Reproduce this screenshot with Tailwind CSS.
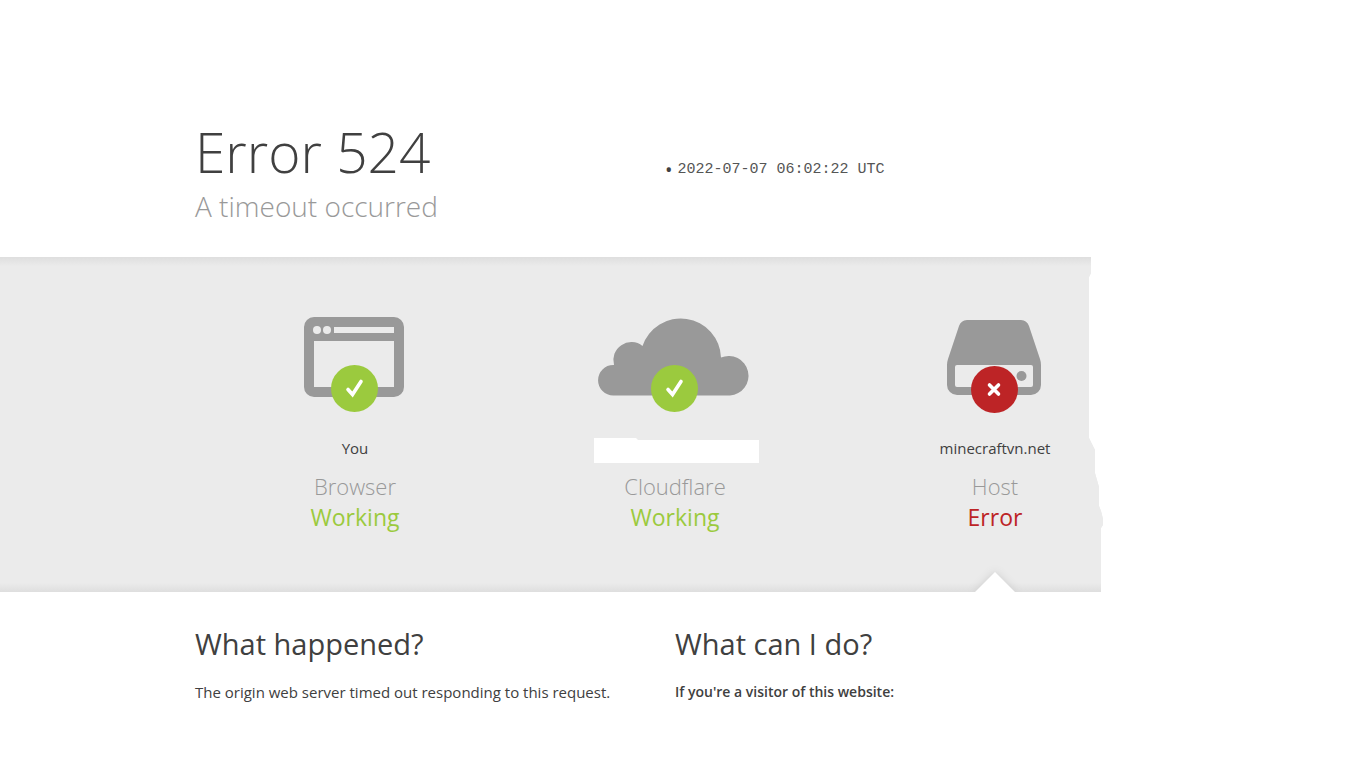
<!DOCTYPE html>
<html lang="en">
<head>
    <meta charset="UTF-8">
    <meta name="viewport" content="width=device-width, initial-scale=1.0">
    <title>524: A timeout occurred</title>
    <script src="https://cdn.jsdelivr.net/npm/@tailwindcss/browser@4"></script>
</head>
<body class="bg-white font-['Segoe_UI','Open_Sans',sans-serif] text-[15px] leading-6 text-[#404040]">

    <!-- Title -->
    <header class="pt-30 pr-4">
        <div class="mx-auto flex max-w-[960px] flex-wrap">
            <div class="w-1/2 min-w-[250px]">
                <h1 class="text-[55px] leading-[64px] font-light">Error 524</h1>
                <h2 class="pt-1 text-[28px] leading-[36px] font-light text-[#999999]">A timeout occurred</h2>
            </div>
            <ul class="-ml-[10px] w-1/2 list-none pt-[38px]">
                <li class="flex items-center gap-[5px]"><span class="text-xl leading-6">&bull;</span><time class="font-['Courier_New','Liberation_Mono',monospace] text-[15px] leading-6 text-[#555555]">2022-07-07 06:02:22 UTC</time></li>
            </ul>
        </div>
    </header>

    <!-- Connection status -->
    <section class="mt-[33px] overflow-hidden bg-[#ebebeb] bg-[linear-gradient(#dedede,#ebebeb_9px,#ebebeb_326px,#dedede)] pr-4 [clip-path:polygon(0_0,1091px_0,1091px_16px,1089px_20px,1089px_181px,1095px_193px,1095px_216px,1099px_230px,1099px_249px,1101px_254px,1103px_262px,1103px_268px,1101px_271px,1101px_100%,0_100%)]">
        <div class="mx-auto grid max-w-[960px] grid-cols-3 text-center">
            <div class="flex flex-col items-center pt-[55px] pb-[59px]">
                <svg class="h-[104px] w-[160px]" viewBox="0 0 160 104" fill="none" aria-hidden="true">
                    <path fill="#999" fill-rule="evenodd" d="M39 5h80a10 10 0 0 1 10 10v60a10 10 0 0 1-10 10H39a10 10 0 0 1-10-10V15A10 10 0 0 1 39 5zM39 29v46h80V29zM59 15v6h60v-6z" />
                    <circle cx="42" cy="18" r="4" fill="#ebebeb" />
                    <circle cx="52" cy="18" r="4" fill="#ebebeb" />
                    <circle cx="79.500" cy="76.500" r="23.500" fill="#9bca3e" />
                    <path d="M73 77.500l4.500 5L86 69.500" stroke="#fff" stroke-width="3.600" stroke-linecap="round" />
                </svg>
                <span class="mt-5 h-6">You</span>
                <h3 class="mt-[11px] text-[22px] leading-[31px] font-light text-[#999999]">Browser</h3>
                <span class="text-[23px] leading-[31px] text-[#9bca3e]">Working</span>
            </div>
            <div class="flex flex-col items-center pt-[55px] pb-[59px]">
                <svg class="h-[104px] w-[160px]" viewBox="0 0 160 104" fill="none" aria-hidden="true">
                    <path fill="#999" d="M18.300 83.500a15.250 15.250 0 0 1 0-30.500H19A18 18 0 0 1 47.500 34a40.300 40.300 0 0 1 78.500 11.500A19.800 19.800 0 1 1 135 83.500z" />
                    <circle cx="79.500" cy="76.500" r="23.500" fill="#9bca3e" />
                    <path d="M73 77.500l4.500 5L86 69.500" stroke="#fff" stroke-width="3.600" stroke-linecap="round" />
                </svg>
                <span class="mt-[22px] mb-2 ml-[3px] h-[25px] w-[165px] bg-white [clip-path:polygon(0_0,42px_0,44px_2px,100%_2px,100%_100%,0_100%)]"></span>
                <h3 class="text-[22px] leading-[31px] font-light text-[#999999]">Cloudflare</h3>
                <span class="text-[23px] leading-[31px] text-[#9bca3e]">Working</span>
            </div>
            <div class="relative flex flex-col items-center pt-[55px] pb-[59px]">
                <svg class="h-[104px] w-[160px]" viewBox="0 0 160 104" fill="none" aria-hidden="true">
                    <path fill="#999" fill-rule="evenodd" d="M52 8h54a9 9 0 0 1 8 6l11 33q1 3 1 6v20a10 10 0 0 1-10 10H42a10 10 0 0 1-10-10V53q0-3 1-6l11-33a9 9 0 0 1 8-6zM42 53a2 2 0 0 0-2 2v18a2 2 0 0 0 2 2h74a2 2 0 0 0 2-2V55a2 2 0 0 0-2-2z" />
                    <circle cx="106.500" cy="64" r="5" fill="#999" />
                    <circle cx="79.500" cy="77.500" r="23.500" fill="#bd2426" />
                    <path d="M74.500 73l9 9M83.500 73l-9 9" stroke="#fff" stroke-width="3.600" stroke-linecap="round" />
                </svg>
                <span class="mt-5 h-6">minecraftvn.net</span>
                <h3 class="mt-[11px] text-[22px] leading-[31px] font-light text-[#999999]">Host</h3>
                <span class="text-[23px] leading-[31px] text-[#bd2426]">Error</span>
                <div class="absolute -bottom-[15px] left-1/2 size-[29px] -translate-x-1/2 rotate-45 bg-white shadow-[0_0_8px_#cccccc]"></div>
            </div>
        </div>
    </section>

    <!-- Explanation -->
    <main class="pt-8 pr-4 pb-12">
        <div class="mx-auto grid max-w-[960px] grid-cols-2">
            <div>
                <h2 class="text-[29px] leading-[40px]">What happened?</h2>
                <p class="pt-4">The origin web server timed out responding to this request.</p>
            </div>
            <div>
                <h2 class="text-[29px] leading-[40px]">What can I do?</h2>
                <h5 class="pt-4 text-[14px] font-semibold">If you're a visitor of this website:</h5>
            </div>
        </div>
    </main>

</body>
</html>
